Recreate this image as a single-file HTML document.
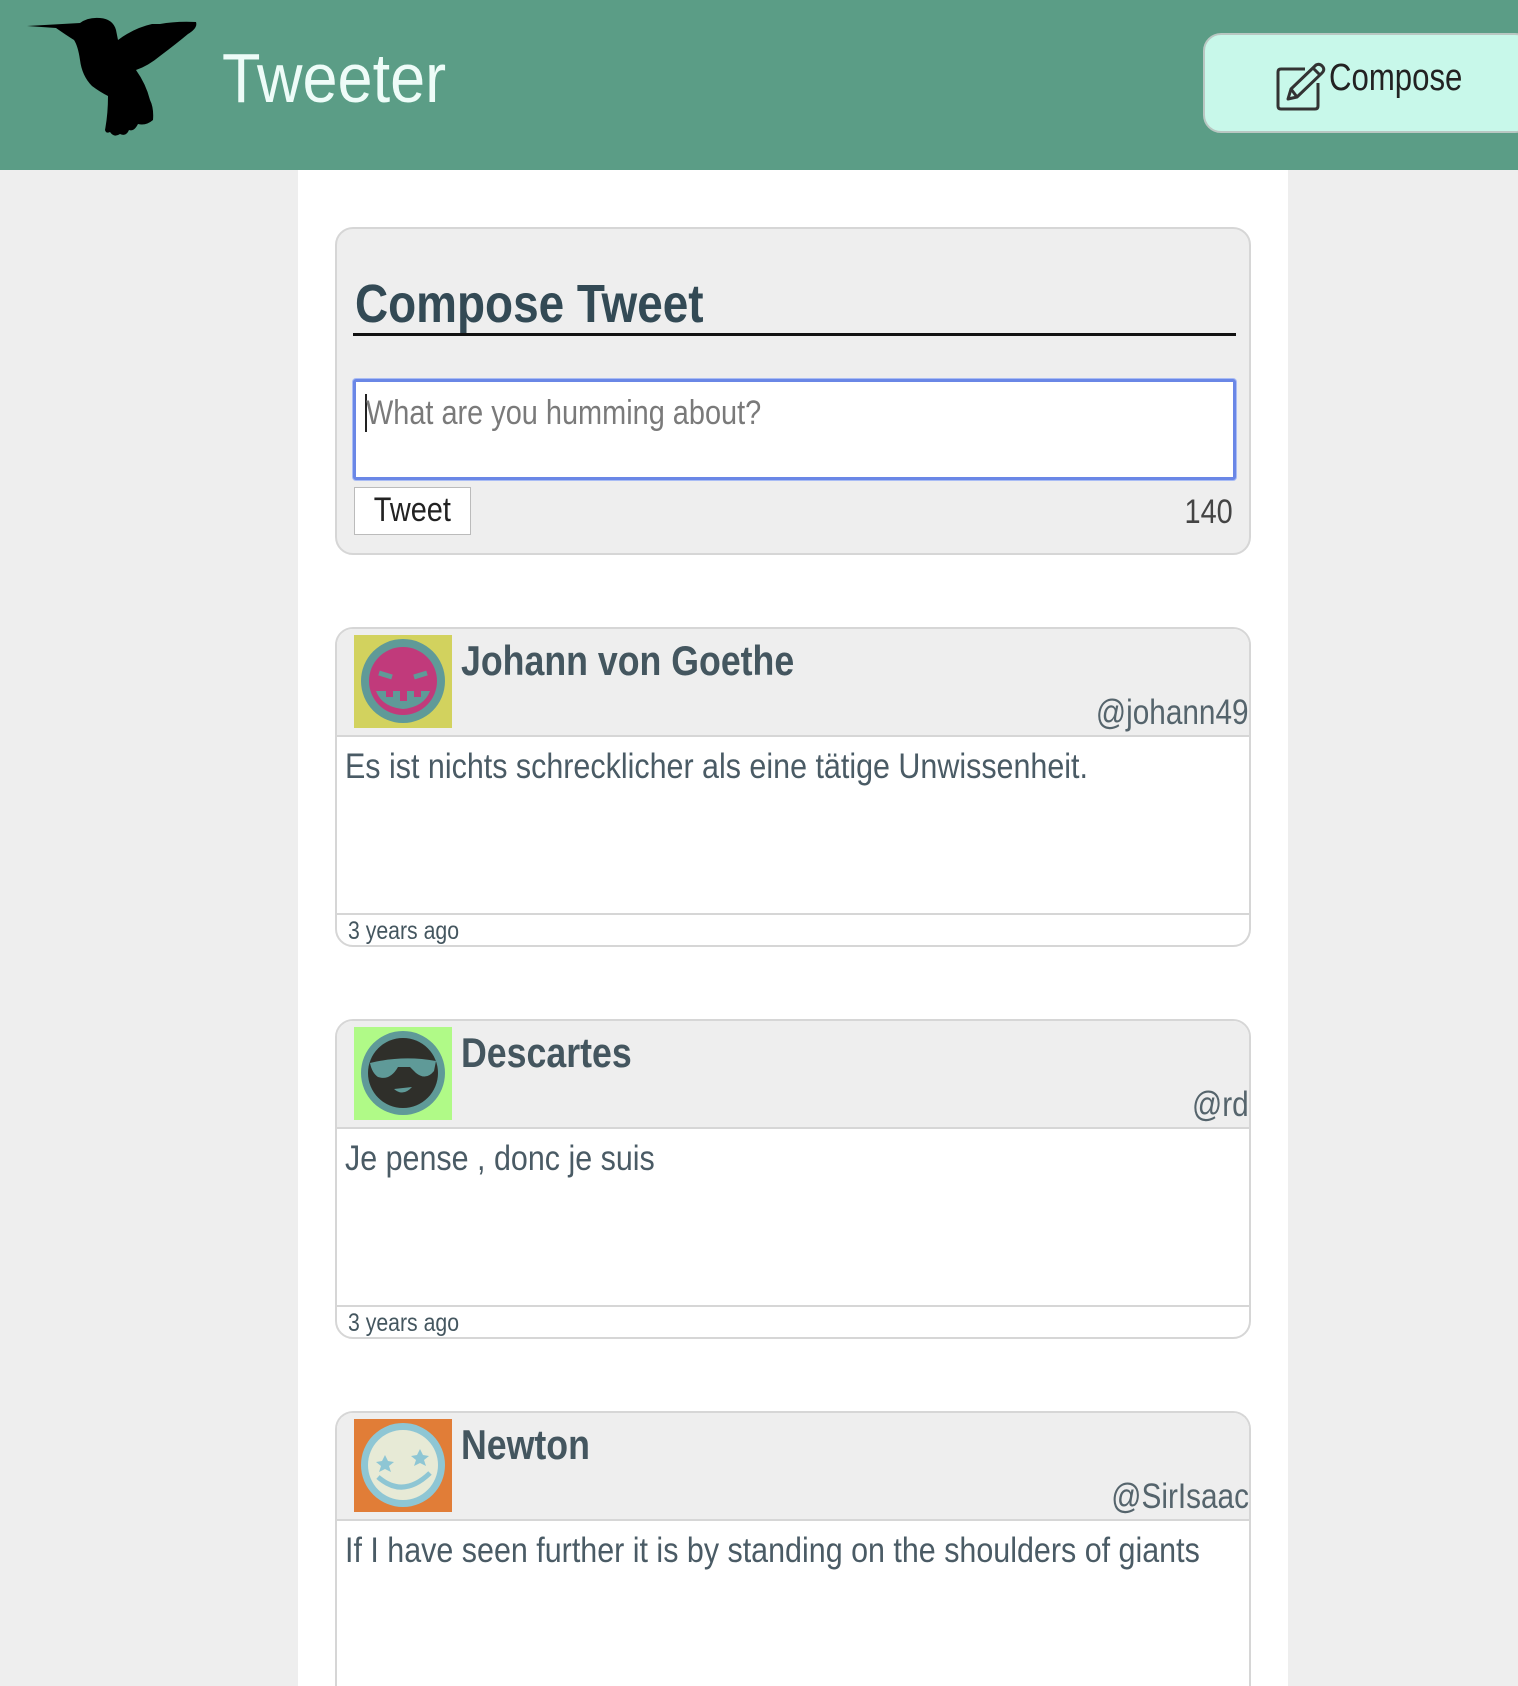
<!DOCTYPE html>
<html><head><meta charset="utf-8"><style>
*{box-sizing:border-box;margin:0;padding:0}
html,body{width:1518px;height:1686px;overflow:hidden}
body{background:#eeeeee;font-family:"Liberation Sans",sans-serif;color:#4a5b65;position:relative}
.s{display:inline-block;white-space:nowrap;transform-origin:0 0}
.hdr{position:absolute;left:0;top:0;width:1518px;height:170px;background:#5b9d86;overflow:hidden}
.logo{position:absolute;left:222px;top:38px;font-size:70px;color:#eefcf8;transform:scaleX(0.9)}
.cbtn{position:absolute;left:1203px;top:33px;width:330px;height:100px;background:#c8f8ea;border:2px solid #b9c7c2;border-radius:18px}
.cbtn span{position:absolute;left:124px;top:22px;font-size:38px;color:#222;transform:scaleX(0.82)}
.col{position:absolute;left:298px;top:170px;width:990px;height:1516px;background:#fff}
.box{position:absolute;left:335px;top:227px;width:916px;height:328px;background:#eeeeee;border:2px solid #d6d6d6;border-radius:18px}
.box h2{position:absolute;left:18px;top:44px;font-size:54px;font-weight:bold;color:#334a55;transform:scaleX(0.85)}
.uline{position:absolute;left:16px;top:104px;width:883px;height:3px;background:#111}
.ta{position:absolute;left:16px;top:150px;width:883px;height:101px;background:#fff;border:3px solid #6a87e6;border-radius:3px;box-shadow:0 0 0 1px #a9bcf5}
.ta span{position:absolute;left:10px;top:12px;font-size:34px;color:#7a7a7a;transform:scaleX(0.85)}
.ta i{position:absolute;left:9px;top:12px;width:2px;height:38px;background:#222}
.tb{position:absolute;left:17px;top:258px;width:117px;height:48px;background:#fff;border:1px solid #bbb;font-size:34px;color:#222;text-align:center;line-height:44px}
.tb span{transform:scaleX(0.85);transform-origin:50% 0}
.cnt{position:absolute;right:16px;top:264px;font-size:34px;color:#444;transform:scaleX(0.85);transform-origin:100% 0}
.card{position:absolute;left:335px;width:916px;height:320px;border:2px solid #d6d6d6;border-radius:18px;background:#fff;overflow:hidden}
.ch{position:absolute;left:0;top:0;width:100%;height:108px;background:#eeeeee;border-bottom:2px solid #d6d6d6}
.av{position:absolute;left:17px;top:6px;width:98px;height:93px}
.nm{position:absolute;left:124px;top:8px;font-size:42px;font-weight:bold;color:#44565f;transform:scaleX(0.85)}
.hd{position:absolute;right:0;top:64px;font-size:35px;color:#55646c;transform:scaleX(0.85);transform-origin:100% 0}
.tx{position:absolute;left:8px;top:118px;font-size:35px;color:#4a5b65;transform:scaleX(0.87)}
.ft{position:absolute;left:0;top:284px;width:100%;height:36px;border-top:2px solid #d6d6d6;padding-left:11px;padding-top:2px}
.ft span{font-size:25px;color:#44565f;transform:scaleX(0.85)}
</style></head><body>
<div class="hdr">
<svg style="position:absolute;left:26px;top:16px" width="175" height="124" viewBox="0 0 175 124">
<path fill="#000" d="M1 10 L54 7 Q62 1 74 2 Q87 3 90 14 L92 24 Q108 12 126 8 L134 8 Q150 5 170 6 Q172 12 162 18 Q150 28 134 40 Q122 50 110 54 Q120 68 124 84 Q128 92 127 104 Q120 110 112 108 Q108 116 103 114 Q100 121 94 118 Q88 122 84 116 Q80 118 79 114 Q82 98 82 80 Q74 76 66 70 Q56 60 54 44 Q52 30 48 24 Q40 19 30 12 Z"/>
</svg>
<div class="logo s">Tweeter</div>
<div class="cbtn">
<svg style="position:absolute;left:70px;top:26px" width="52" height="52" viewBox="0 0 52 52" fill="none" stroke="#333" stroke-width="3" stroke-linejoin="round">
<path d="M30 8 H6 Q3 8 3 11 V45 Q3 48 6 48 H40 Q43 48 43 45 V22"/>
<path d="M13 38 L16 28 L41 4 Q45 2 48 6 Q50 9 47 12 L22 36 Z M16 28 L22 36 M38 7 L45 14"/>
</svg>
<span class="s">Compose</span></div>
</div>
<div class="col"></div>
<div class="box">
<h2 class="s">Compose Tweet</h2><div class="uline"></div>
<div class="ta"><i></i><span class="s">What are you humming about?</span></div>
<div class="tb"><span class="s">Tweet</span></div><div class="cnt s">140</div>
</div>

<div class="card" style="top:627px">
<div class="ch">
<svg class="av" viewBox="0 0 98 93"><rect width="98" height="93" fill="#d2d25e"/><circle cx="49" cy="46" r="42" fill="#5f9a98"/><circle cx="49" cy="46" r="34" fill="#c13a7b"/><path d="M25 38 L38 42 M73 38 L60 42" stroke="#5f9a98" stroke-width="5"/><path d="M22 56 H76 Q70 72 49 74 Q28 72 22 56Z" fill="#5f9a98"/><path d="M32 56 h7 v6 h-7z M46 56 h7 v10 h-7z M60 56 h7 v6 h-7z" fill="#c13a7b"/></svg>
<div class="nm s">Johann von Goethe</div><div class="hd s">@johann49</div></div>
<div class="tx s">Es ist nichts schrecklicher als eine tätige Unwissenheit.</div>
<div class="ft"><span class="s">3 years ago</span></div></div>

<div class="card" style="top:1019px">
<div class="ch">
<svg class="av" viewBox="0 0 98 93"><rect width="98" height="93" fill="#b0fa87"/><circle cx="49" cy="46" r="42" fill="#5f9a98"/><circle cx="49" cy="46" r="35" fill="#2f2f2a"/><path d="M16 36 Q49 28 82 34 L80 44 Q72 54 62 46 L56 40 L44 40 Q36 54 24 50 Q18 46 16 36Z" fill="#5f9a98"/><path d="M40 62 Q49 70 58 60 Z" fill="#5f9a98"/></svg>
<div class="nm s">Descartes</div><div class="hd s">@rd</div></div>
<div class="tx s">Je pense , donc je suis</div>
<div class="ft"><span class="s">3 years ago</span></div></div>

<div class="card" style="top:1411px;height:290px;border-bottom:none;border-radius:18px 18px 0 0">
<div class="ch">
<svg class="av" viewBox="0 0 98 93"><rect width="98" height="93" fill="#e17d37"/><circle cx="49" cy="46" r="42" fill="#8ec6d4"/><circle cx="49" cy="46" r="35" fill="#e7ead6"/><path d="M31 36 l3 6 6 1 -5 4 2 6 -6-3 -6 3 2-6 -5-4 6-1z M66 30 l3 6 6 1 -5 4 2 6 -6-3 -6 3 2-6 -5-4 6-1z" fill="#8ec6d4"/><path d="M24 58 Q49 80 76 54" stroke="#8ec6d4" stroke-width="5" fill="none"/></svg>
<div class="nm s">Newton</div><div class="hd s">@SirIsaac</div></div>
<div class="tx s">If I have seen further it is by standing on the shoulders of giants</div>
</div>
</body></html>
